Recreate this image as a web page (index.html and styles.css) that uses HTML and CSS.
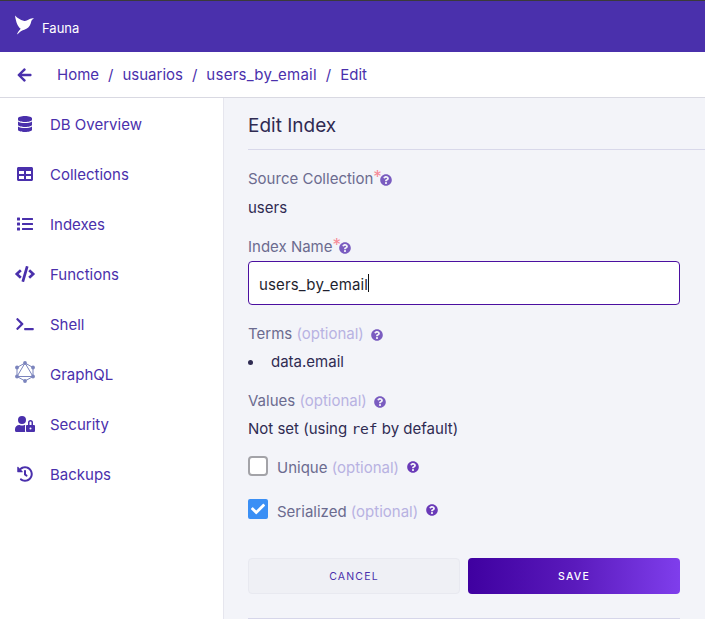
FILE: index.html
```html
<!DOCTYPE html>
<html lang="en">
<head>
    <meta charset="UTF-8">
    <title>Fauna - Edit Index</title>
    <link rel="stylesheet" href="styles.css">
</head>
<body>
    <!-- top bar -->
    <header class="topbar">
        <svg class="logo" viewBox="0 0 20 20"><path d="M0 0C3 3 5.500 4.500 9 5.500C11 6 12.500 5.500 14 4.500C15.500 3.500 17.500 2.500 20 3C18.500 4 17.500 5 17 6.500C16.500 9.500 15 12.500 12 14C9 15.500 6 16 3.500 19L2 20C3 17.500 4.500 15.500 6 14C3 12 1 7 0 0Z"/></svg>
        <span class="brand">Fauna</span>
    </header>

    <!-- breadcrumb -->
    <nav class="crumbs">
        <svg class="back" viewBox="0 0 448 512"><path d="M257.500 445.100l-22.200 22.200c-9.400 9.400-24.600 9.400-33.900 0L7 273c-9.400-9.400-9.400-24.600 0-33.900L201.400 44.700c9.400-9.400 24.600-9.400 33.900 0l22.200 22.200c9.500 9.500 9.300 25-.4 34.300L136.600 216H424c13.300 0 24 10.700 24 24v32c0 13.300-10.700 24-24 24H136.600l120.500 114.800c9.800 9.300 10 24.800.4 34.300z"/></svg>
        <a>Home</a><i>/</i><a>usuarios</a><i>/</i><a class="wide">users_by_email</a><i>/</i><a>Edit</a>
    </nav>

    <div class="layout">
        <!-- menu -->
        <aside class="sidebar">
            <a class="item">
                <span class="ico"><svg width="14" height="16" viewBox="0 0 448 512"><path d="M448 73.143v45.714C448 159.143 347.667 192 224 192S0 159.143 0 118.857V73.143C0 32.857 100.333 0 224 0s224 32.857 224 73.143zM448 176v102.857C448 319.143 347.667 352 224 352S0 319.143 0 278.857V176c48.125 33.143 136.208 48.572 224 48.572S399.874 209.143 448 176zm0 160v102.857C448 479.143 347.667 512 224 512S0 479.143 0 438.857V336c48.125 33.143 136.208 48.572 224 48.572S399.874 369.143 448 336z"/></svg></span>
                DB Overview
            </a>
            <a class="item">
                <span class="ico"><svg width="16" height="16" viewBox="0 0 512 512"><path d="M464 32H48C21.490 32 0 53.490 0 80v352c0 26.510 21.490 48 48 48h416c26.510 0 48-21.490 48-48V80c0-26.510-21.490-48-48-48zM224 416H64v-96h160v96zm0-160H64v-96h160v96zm224 160H288v-96h160v96zm0-160H288v-96h160v96z"/></svg></span>
                Collections
            </a>
            <a class="item">
                <span class="ico"><svg width="16" height="16" viewBox="0 0 512 512"><path d="M80 368H16a16 16 0 0 0-16 16v64a16 16 0 0 0 16 16h64a16 16 0 0 0 16-16v-64a16 16 0 0 0-16-16zm0-320H16A16 16 0 0 0 0 64v64a16 16 0 0 0 16 16h64a16 16 0 0 0 16-16V64a16 16 0 0 0-16-16zm0 160H16a16 16 0 0 0-16 16v64a16 16 0 0 0 16 16h64a16 16 0 0 0 16-16v-64a16 16 0 0 0-16-16zm416 176H176a16 16 0 0 0-16 16v32a16 16 0 0 0 16 16h320a16 16 0 0 0 16-16v-32a16 16 0 0 0-16-16zm0-320H176a16 16 0 0 0-16 16v32a16 16 0 0 0 16 16h320a16 16 0 0 0 16-16V80a16 16 0 0 0-16-16zm0 160H176a16 16 0 0 0-16 16v32a16 16 0 0 0 16 16h320a16 16 0 0 0 16-16v-32a16 16 0 0 0-16-16z"/></svg></span>
                Indexes
            </a>
            <a class="item">
                <span class="ico"><svg width="20" height="16" viewBox="0 0 640 512"><path d="M278.900 511.500l-61-17.700c-6.400-1.800-10-8.500-8.200-14.900L346.200 8.700c1.800-6.400 8.500-10 14.900-8.200l61 17.700c6.400 1.800 10 8.500 8.200 14.900L293.800 503.300c-1.900 6.400-8.500 10.100-14.900 8.200zm-114-112.200l43.500-46.400c4.600-4.900 4.300-12.700-.8-17.200L117 256l90.600-79.700c5.100-4.500 5.500-12.300.8-17.200l-43.500-46.400c-4.500-4.800-12.100-5.100-17-.5L3.800 247.200c-5.100 4.700-5.100 12.800 0 17.500l144.100 135.100c4.900 4.600 12.500 4.400 17-.5zm327.200.6l144.100-135.100c5.100-4.700 5.100-12.800 0-17.500L492.100 112.100c-4.800-4.500-12.400-4.300-17 .5L431.600 159c-4.600 4.900-4.300 12.700.8 17.200L523 256l-90.600 79.700c-5.100 4.500-5.500 12.300-.8 17.200l43.500 46.400c4.500 4.900 12.100 5.100 17 .6z"/></svg></span>
                Functions
            </a>
            <a class="item">
                <span class="ico"><svg width="18" height="14" viewBox="0 0 640 512"><path d="M257.981 272.971L63.638 467.314c-9.373 9.373-24.569 9.373-33.941 0L7.029 444.647c-9.357-9.357-9.375-24.522-.04-33.901L161.011 256 6.990 101.255c-9.335-9.379-9.317-24.544.04-33.901l22.667-22.667c9.373-9.373 24.569-9.373 33.941 0L257.981 239.030c9.373 9.372 9.373 24.568 0 33.941zM640 456v-32c0-13.255-10.745-24-24-24H312c-13.255 0-24 10.745-24 24v32c0 13.255 10.745 24 24 24h304c13.255 0 24-10.745 24-24z"/></svg></span>
                Shell
            </a>
            <a class="item">
                <span class="ico"><svg class="gql" width="20" height="22" viewBox="0 0 20 22"><path d="M10 2L18 6.500V15.500L10 20L2 15.500V6.500ZM10 2L18 15.500H2Z"/><g><circle cx="10" cy="2" r="1.900"/><circle cx="18" cy="6.500" r="1.900"/><circle cx="18" cy="15.500" r="1.900"/><circle cx="10" cy="20" r="1.900"/><circle cx="2" cy="15.500" r="1.900"/><circle cx="2" cy="6.500" r="1.900"/></g></svg></span>
                GraphQL
            </a>
            <a class="item">
                <span class="ico"><svg width="20" height="16" viewBox="0 0 640 512"><path d="M224 256A128 128 0 1 0 96 128a128 128 0 0 0 128 128zm96 64a63.080 63.080 0 0 1 8.100-30.500c-4.800-.5-9.500-1.500-14.500-1.500h-16.700a174.080 174.080 0 0 1-145.800 0h-16.700A134.430 134.430 0 0 0 0 422.400V464a48 48 0 0 0 48 48h280.900a63.540 63.540 0 0 1-8.900-32zm288-32h-32v-80a80 80 0 0 0-160 0v80h-32a32 32 0 0 0-32 32v160a32 32 0 0 0 32 32h224a32 32 0 0 0 32-32V320a32 32 0 0 0-32-32zM496 432a32 32 0 1 1 32-32 32 32 0 0 1-32 32zm32-144h-64v-80a32 32 0 0 1 64 0z"/></svg></span>
                Security
            </a>
            <a class="item">
                <span class="ico"><svg width="16" height="16" viewBox="0 0 512 512"><path d="M504 255.531c.253 136.640-111.180 248.372-247.820 248.468-59.015.042-113.223-20.530-155.822-54.911-11.077-8.940-11.905-25.541-1.839-35.607l11.267-11.267c8.609-8.609 22.353-9.551 31.891-1.984C173.062 425.135 212.781 440 256 440c101.705 0 184-82.311 184-184 0-101.705-82.311-184-184-184-48.814 0-93.149 18.969-126.068 49.932l50.754 50.754c10.080 10.080 2.941 27.314-11.313 27.314H24c-8.837 0-16-7.163-16-16V38.627c0-14.254 17.234-21.393 27.314-11.314l49.372 49.372C129.209 34.136 189.552 8 256 8c136.810 0 247.747 110.780 248 247.531zm-180.912 78.784l9.823-12.630c8.138-10.463 6.253-25.542-4.210-33.679L288 256.349V152c0-13.255-10.745-24-24-24h-16c-13.255 0-24 10.745-24 24v135.651l65.409 50.874c10.463 8.137 25.541 6.253 33.679-4.210z"/></svg></span>
                Backups
            </a>
        </aside>

        <!-- form -->
        <main class="content">
            <h1 class="title">Edit Index</h1>

            <div class="field source">
                <label class="lbl">Source Collection<span class="req">*</span><svg class="help tight" viewBox="0 0 512 512"><use href="#q"/></svg></label>
                <p class="val">users</p>
            </div>

            <div class="field name">
                <label class="lbl">Index Name<span class="req">*</span><svg class="help tight" viewBox="0 0 512 512"><use href="#q"/></svg></label>
                <div class="input">users_by_email<b class="caret"></b></div>
            </div>

            <div class="field terms">
                <label class="lbl">Terms <em>(optional)</em><svg class="help" viewBox="0 0 512 512"><use href="#q"/></svg></label>
                <ul class="list"><li>data.email</li></ul>
            </div>

            <div class="field values">
                <label class="lbl">Values <em>(optional)</em><svg class="help" viewBox="0 0 512 512"><use href="#q"/></svg></label>
                <p class="val">Not set (using <code>ref</code> by default)</p>
            </div>

            <div class="check unique">
                <span class="box"></span>
                <span class="lbl">Unique <em>(optional)</em></span>
                <svg class="help dark" viewBox="0 0 512 512"><use href="#q"/></svg>
            </div>
            <div class="check serial">
                <span class="box on"><svg viewBox="0 0 512 512"><path d="M173.898 439.404l-166.400-166.400c-9.997-9.997-9.997-26.206 0-36.204l36.203-36.204c9.997-9.998 26.207-9.998 36.204 0L192 312.690 432.095 72.596c9.997-9.997 26.207-9.997 36.204 0l36.203 36.204c9.997 9.997 9.997 26.206 0 36.204l-294.400 294.401c-9.998 9.997-26.207 9.997-36.204-.001z"/></svg></span>
                <span class="lbl">Serialized <em>(optional)</em></span>
                <svg class="help dark" viewBox="0 0 512 512"><use href="#q"/></svg>
            </div>

            <div class="buttons">
                <button class="btn cancel">CANCEL</button>
                <button class="btn save">SAVE</button>
            </div>
            <hr class="line">
        </main>
    </div>

    <svg class="defs" width="0" height="0"><symbol id="q" viewBox="0 0 512 512"><path d="M504 256c0 136.997-111.043 248-248 248S8 392.997 8 256C8 119.083 119.043 8 256 8s248 111.083 248 248zM262.655 90c-54.497 0-89.255 22.957-116.549 63.758-3.536 5.286-2.353 12.415 2.715 16.258l34.699 26.310c5.205 3.947 12.621 3.008 16.665-2.122 17.864-22.658 30.113-35.797 57.303-35.797 20.429 0 45.698 13.148 45.698 32.958 0 14.976-12.363 22.667-32.534 33.976C247.128 238.528 216 254.941 216 296v4c0 6.627 5.373 12 12 12h56c6.627 0 12-5.373 12-12v-1.333c0-28.462 83.186-29.647 83.186-106.667 0-58.002-60.165-102-116.531-102zM256 338c-25.365 0-46 20.635-46 46 0 25.364 20.635 46 46 46s46-20.636 46-46c0-25.365-20.635-46-46-46z"/></symbol></svg>
</body>
</html>
```

FILE: styles.css
```css
body {
    margin: 0;
    height: 619px;
    overflow: hidden;
    display: flex;
    flex-direction: column;
    font-family: Inter, "Liberation Sans", sans-serif;
    font-size: 15px;
    background: #f3f4f9;
}
.defs {
    position: absolute;
}

/* top bar */
.topbar {
    height: 51px;
    flex: none;
    display: flex;
    align-items: center;
    gap: 8px;
    padding-left: 15px;
    background: #4a30ac;
    border-top: 1px solid #3a3a3a;
}
.logo {
    width: 19px;
    height: 20px;
    fill: #fff;
    margin-top: -4px;
}
.brand {
    color: #fff;
    font-size: 13px;
    margin-top: 3px;
}

/* breadcrumb */
.crumbs {
    height: 45px;
    flex: none;
    display: flex;
    align-items: center;
    padding-left: 17px;
    background: #fff;
    border-bottom: 1px solid #d9d9e2;
    color: #4a30ac;
}
.back {
    width: 15px;
    height: 16px;
    fill: #4a30ac;
    margin-right: 25px;
}
.crumbs i {
    font-style: normal;
    margin: 0 9px;
}
.crumbs .wide {
    letter-spacing: 0.25px;
}

.layout {
    flex: 1;
    display: flex;
    min-height: 0;
}

/* menu */
.sidebar {
    width: 223px;
    flex: none;
    padding-top: 1px;
    background: #fff;
    border-right: 1px solid #e6e6ee;
}
.item {
    height: 50px;
    display: flex;
    align-items: center;
    color: #4a30ac;
}
.ico {
    width: 50px;
    flex: none;
    display: flex;
    justify-content: center;
}
.ico svg {
    fill: #4a30ac;
}
.ico svg.gql {
    fill: #7b84bd;
    margin-top: -4px;
}
.gql path {
    fill: none;
    stroke: #7b84bd;
    stroke-width: 1;
}

/* form */
.content {
    flex: 1;
    padding: 0 25px 0 24px;
    min-width: 0;
}
.title {
    margin: 0 -25px 0 0;
    height: 51px;
    line-height: 56px;
    font-size: 19px;
    font-weight: 400;
    color: #2f2b52;
    border-bottom: 1px solid #d8d8ea;
}
.lbl {
    display: block;
    height: 18px;
    line-height: 20px;
    color: #6b6b8f;
}
.req {
    color: #f78a96;
    font-size: 17px;
    line-height: 0;
    vertical-align: 1px;
}
.lbl em {
    font-style: normal;
    color: #b8b2e2;
}
.help {
    width: 12px;
    height: 12px;
    fill: #7a5cc0;
    margin-left: 7px;
    vertical-align: -2px;
}
.help.tight {
    margin-left: -2px;
}
.help.dark {
    fill: #6a3ab8;
    margin-left: 8px;
}
.val {
    margin: 10px 0 0;
    height: 18px;
    color: #2f2b52;
    line-height: 20px;
}
.val code {
    font-family: "DejaVu Sans Mono", monospace;
    font-size: 14.5px;
}
.source {
    margin-top: 19px;
}
.source .val {
    margin-top: 11px;
}
.name {
    margin-top: 21px;
}
.input {
    margin-top: 6px;
    height: 44px;
    box-sizing: border-box;
    border: 1px solid #4b0fa0;
    border-radius: 4px;
    background: #fff;
    padding: 2px 0 0 10px;
    display: flex;
    align-items: center;
    color: #1f1f2e;
    letter-spacing: 0.15px;
}
.caret {
    width: 1px;
    height: 18px;
    margin-top: -2px;
    background: #111;
}
.terms {
    margin-top: 19px;
}
.list {
    margin: 10px 0 0;
    padding-left: 23px;
    list-style: none;
    color: #2f2b52;
    height: 18px;
    line-height: 20px;
}
.list li {
    display: flex;
    align-items: center;
}
.list li::before {
    content: "";
    width: 5px;
    height: 5px;
    margin-left: -23px;
    margin-right: 18px;
    border-radius: 50%;
    background: #2f2b52;
}
.values {
    margin-top: 21px;
}
.check {
    display: flex;
    align-items: center;
    height: 20px;
}
.check .lbl {
    margin: 2px 0 0 9px;
}
.check.serial .lbl {
    margin-top: 4px;
}
.check .help {
    margin-top: 1px;
}
.unique {
    margin-top: 19px;
}
.serial {
    margin-top: 23px;
}
.box {
    width: 20px;
    height: 20px;
    box-sizing: border-box;
    border: 2px solid #a3a3a8;
    border-radius: 4px;
    background: #fff;
    display: flex;
    align-items: center;
    justify-content: center;
}
.box.on {
    background: #3a8ff5;
    border-color: #3a8ff5;
    border-radius: 2px;
}
.box svg {
    width: 14px;
    height: 14px;
    fill: #fff;
}

/* buttons */
.buttons {
    display: grid;
    grid-template-columns: 1fr 1fr;
    gap: 8px;
    margin-top: 39px;
}
.btn {
    height: 36px;
    padding-top: 2px;
    border-radius: 4px;
    font-family: Inter, "Liberation Sans", sans-serif;
    font-size: 10.5px;
    letter-spacing: 1.2px;
}
.cancel {
    background: #eff0f5;
    border: 1px solid #e8e9f0;
    color: #4a30ac;
}
.save {
    background: linear-gradient(90deg, #3f00a0 0%, #5a1abc 50%, #7f3eec 100%);
    border: 0;
    color: #fff;
    font-weight: 500;
}
.line {
    margin: 24px 0 0;
    border: 0;
    border-top: 1px solid #d6d6ea;
}
```
